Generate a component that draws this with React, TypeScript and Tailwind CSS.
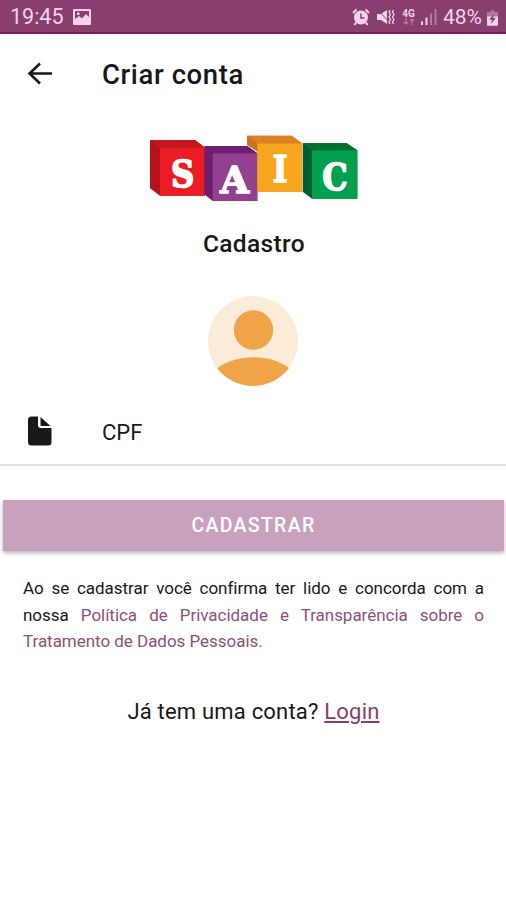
import React from 'react';

const LOGO_BLOCKS = [
  {
    letter: 'S',
    side: '#B5121B',
    top: '#C4161C',
    face: '#EC1C24',
    shape: '30,45 165,45 195,68 195,212 60,212 30,190',
    lid: '30,45 165,45 195,68 60,68',
    front: { x: 60, y: 68, w: 135, h: 144 },
    text: { x: 128, y: 187, w: 70 },
  },
  {
    letter: 'A',
    side: '#6D1F6E',
    top: '#701F70',
    face: '#92408F',
    shape: '193,63 322,63 352,85 352,228 218,228 193,208',
    lid: '193,63 322,63 352,85 218,85',
    front: { x: 218, y: 85, w: 134, h: 143 },
    text: { x: 284, y: 204, w: 86 },
  },
  {
    letter: 'I',
    side: '#C87522',
    top: '#D98324',
    face: '#F8A51F',
    shape: '321,32 455,32 486,55 486,200 352,200 352,80 321,60',
    lid: '321,32 455,32 486,55 352,55',
    front: { x: 352, y: 55, w: 134, h: 145 },
    text: { x: 420, y: 172, w: 44 },
  },
  {
    letter: 'C',
    side: '#00602F',
    top: '#00702F',
    face: '#00A04E',
    shape: '488,55 620,55 652,76 652,221 516,221 488,200',
    lid: '488,55 620,55 652,76 516,76',
    front: { x: 516, y: 76, w: 136, h: 145 },
    text: { x: 585, y: 195, w: 76 },
  },
];

const Logo: React.FC = () => (
  <svg viewBox="0 0 690 270" className="ml-1 h-[90px] w-[230px]" role="img" aria-label="SAIC">
    {LOGO_BLOCKS.map(({ letter, side, top, face, shape, lid, front, text }) => (
      <g key={letter}>
        <polygon points={shape} fill={side} />
        <polygon points={lid} fill={top} />
        <rect x={front.x} y={front.y} width={front.w} height={front.h} fill={face} />
        <text
          x={text.x}
          y={text.y}
          textAnchor="middle"
          textLength={text.w}
          lengthAdjust="spacingAndGlyphs"
          fill="#fff"
          stroke="#fff"
          strokeWidth="5"
          fontSize="114"
          className="font-['DejaVu_Serif',serif] font-bold"
        >
          {letter}
        </text>
      </g>
    ))}
  </svg>
);

const StatusBar: React.FC = () => (
  <div className="flex h-[34px] items-center justify-between border-b-2 border-[#7A1A60] bg-[#883E6E] pl-[10px] pr-2 text-[#F3D3EA]">
    <div className="flex items-center gap-[10px] pt-[2px]">
      <span className="w-[53px] whitespace-nowrap text-[21.5px] leading-none">19:45</span>
      <svg viewBox="0 0 18 16" className="h-4 w-[18px]">
        <path
          fill="currentColor"
          fillRule="evenodd"
          d="M1 0h16a1 1 0 0 1 1 1v14a1 1 0 0 1-1 1H1a1 1 0 0 1-1-1V1a1 1 0 0 1 1-1zm1 2v8l4-3 3 2.500 4-4.500 3 3V2zm2 1.500h2.500V6H4z"
        />
      </svg>
    </div>

    <div className="flex items-center pt-[2px]">
      <svg viewBox="0 0 18 18" className="mr-[1px] h-[18px] w-[18px]" fill="none" stroke="currentColor">
        <circle cx="9" cy="9.500" r="7" fill="currentColor" stroke="none" />
        <path d="M1 5l3.500-3.500M17 5l-3.500-3.500M4 14.500L2.500 17M14 14.500l1.500 2.500" strokeWidth="2" />
        <path d="M9 5.500v4.500h3.500" stroke="#883E6E" strokeWidth="1.500" />
      </svg>
      <svg viewBox="0 0 18 18" className="ml-[6px] h-[18px] w-[18px]" fill="none" stroke="currentColor">
        <path d="M0 6h4l6-4v14l-6-4H0z" fill="currentColor" stroke="none" />
        <path d="M0 1.500l11 11" stroke="#883E6E" strokeWidth="1" />
        <path d="M13 2l-1 2 1.500 2.500L12 9l1.500 2.500L12 14l1 2M16.500 2l-1 2L17 6.500 15.500 9l1.500 2.500-1.500 2.500 1 2" strokeWidth="1.300" />
      </svg>
      <div className="ml-[7px] flex w-[13px] flex-col items-center">
        <span className="text-[10px] font-bold leading-[9px]">4G</span>
        <svg viewBox="0 0 12 7" className="h-[7px] w-3 opacity-40" fill="none" stroke="currentColor" strokeWidth="1.300">
          <path d="M3 0v6M1 4l2 2 2-2M9 7V1M7 3l2-2 2 2" />
        </svg>
      </div>
      <svg viewBox="0 0 16 16" className="ml-[6px] h-4 w-4" fill="currentColor">
        <rect x="0" y="12.500" width="2" height="3.500" />
        <rect x="4.500" y="8.500" width="2" height="7.500" />
        <rect x="9" y="4.500" width="2" height="11.500" opacity="0.4" />
        <rect x="13.500" y="0" width="2" height="16" opacity="0.4" />
      </svg>
      <span className="ml-[6px] w-[39px] whitespace-nowrap text-[21px] leading-none">48%</span>
      <svg viewBox="0 0 12 18" className="ml-[5px] h-[17px] w-[11px]">
        <path d="M4 1h4v2h4v6H0V3h4z" fill="currentColor" opacity="0.4" />
        <path d="M0 8h12v9a1 1 0 0 1-1 1H1a1 1 0 0 1-1-1z" fill="currentColor" />
        <path d="M7.500 5L2.500 11.500h3L4.500 16l5-6.500h-3z" fill="#883E6E" />
      </svg>
    </div>
  </div>
);

const Avatar: React.FC = () => (
  <svg viewBox="0 0 90 90" className="h-[90px] w-[90px]">
    <defs>
      <clipPath id="avatar-circle">
        <circle cx="45" cy="45" r="45" />
      </clipPath>
    </defs>
    <g clipPath="url(#avatar-circle)">
      <rect width="90" height="90" fill="#FCEBD7" />
      <circle cx="45.500" cy="34" r="19.700" fill="#F0A347" />
      <path d="M9.500 72C29 57.500 62 57.500 81 72V90H9.500z" fill="#F0A347" />
    </g>
  </svg>
);

export default function App() {
  return (
    <div className="flex h-[900px] w-[506px] flex-col overflow-hidden bg-white font-[Roboto,sans-serif] text-[#17181A]">
      <StatusBar />

      <header className="flex h-[79px] items-center pl-[27px]">
        <button className="h-6 w-[26px]" aria-label="Voltar">
          <svg viewBox="0 0 26 24" className="h-6 w-[26px]" fill="none" stroke="currentColor" strokeWidth="2.600">
            <path d="M25 11.500H3M13 1.500L2.500 11.500 13 21.500" />
          </svg>
        </button>
        <h1 className="ml-[49px] pt-[2px] text-[27.500px] font-medium tracking-[0.600px]">Criar conta</h1>
      </header>

      <main className="flex flex-col">
        <div className="mt-3 flex flex-col items-center">
          <Logo />
          <h2 className="ml-[2px] mt-[11px] h-[36px] text-[24.500px] font-medium leading-[36px] tracking-[0.350px]">
            Cadastro
          </h2>
          <div className="mt-[34px]">
            <Avatar />
          </div>
        </div>

        <label className="mt-3 flex h-[68px] items-center border-b-2 border-[#E2E2E2] pl-7">
          <svg viewBox="0 0 24 30" className="h-[30px] w-6" fill="currentColor">
            <path d="M3.500 0.500H10v8.500a3 3 0 0 0 3 3h10.500V26a3.500 3.500 0 0 1-3.500 3.500H3.500A3.500 3.500 0 0 1 0 26V4A3.500 3.500 0 0 1 3.500 0.500z" />
            <path d="M12.500 1L22.500 10H13.500a1 1 0 0 1-1-1z" />
          </svg>
          <span className="ml-[50px] pt-[2px] text-[22px]">CPF</span>
        </label>

        <button className="ml-[3px] mr-[2px] mt-[34px] h-[51px] bg-[#C9A1BD] text-[19.500px] font-medium tracking-[1.300px] text-white shadow-[0_2px_4px_rgba(0,0,0,0.3)]">
          CADASTRAR
        </button>

        <p className="ml-[23px] mr-[22px] mt-6 text-justify text-[17px] leading-[26.700px] tracking-[-0.030px]">
          Ao se cadastrar você confirma ter lido e concorda com a nossa{' '}
          <a className="text-[#8E5078]">Política de Privacidade e Transparência sobre o Tratamento de Dados Pessoais.</a>
        </p>

        <p className="mt-[42px] pl-[1px] text-center text-[22px] leading-[30px] tracking-[0.200px]">
          Já tem uma conta? <a className="text-[#883E6E] underline decoration-2 underline-offset-2">Login</a>
        </p>
      </main>
    </div>
  );
}
